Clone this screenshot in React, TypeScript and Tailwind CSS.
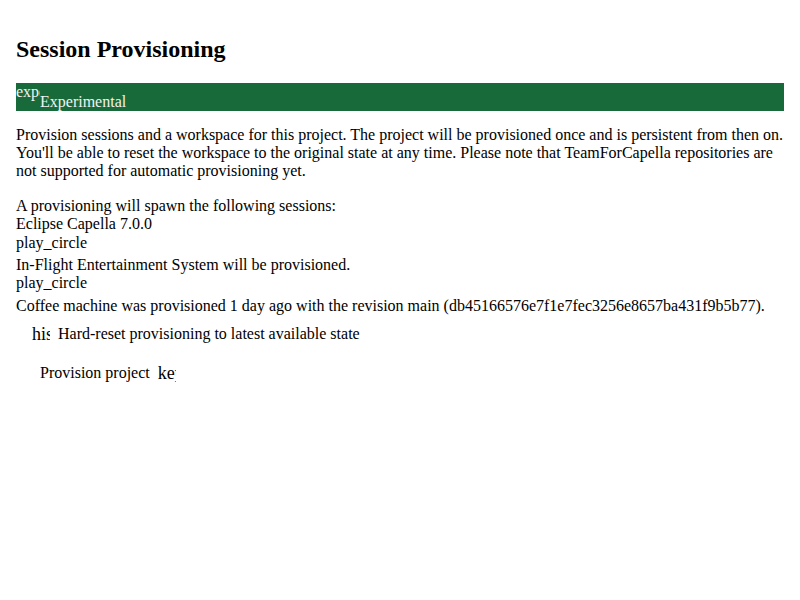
import React from "react";

// Session provisioning panel (rendered without its component stylesheet)

const SESSIONS = [
  { tool: "Eclipse Capella 7.0.0", note: "In-Flight Entertainment System will be provisioned." },
  {
    tool: null,
    note: "Coffee machine was provisioned 1 day ago with the revision main (db45166576e7f1e7fec3256e8657ba431f9b5b77).",
  },
];

const Icon: React.FC<{ name: string; className?: string }> = ({ name, className = "" }) => (
  <span className={`inline-block overflow-hidden whitespace-nowrap ${className}`}>{name}</span>
);

export default function App() {
  return (
    <div
      className="px-4 pt-4 text-[16px] leading-[1.15] text-black"
      style={{ fontFamily: '"Liberation Serif", "Times New Roman", serif' }}
    >
      <h2 className="mt-5 mb-[19px] text-[24px] font-bold leading-[1.15]">Session Provisioning</h2>

      <div className="flex h-[28px] items-start bg-[#186a3b] text-[#f2f2f2]">
        <Icon name="experiment" className="w-[24px]" />
        <span className="pt-[10px]">Experimental</span>
      </div>

      <p className="mt-[15px] mb-4">
        Provision sessions and a workspace for this project. The project will be provisioned once and is
        persistent from then on. You'll be able to reset the workspace to the original state at any time.
        Please note that TeamForCapella repositories are not supported for automatic provisioning yet.
      </p>

      <div>A provisioning will spawn the following sessions:</div>
      <div>{SESSIONS[0].tool}</div>
      {SESSIONS.map((s) => (
        <div key={s.note}>
          <div className="mb-[4px]">play_circle</div>
          <div>{s.note}</div>
        </div>
      ))}

      <div className="mt-[10px] flex items-center pl-4">
        <Icon name="history" className="h-[18px] w-[18px] text-[18px] leading-[18px]" />
        <span className="ml-[8px]">Hard-reset provisioning to latest available state</span>
      </div>

      <div className="mt-[20px] flex items-center pl-6">
        <span>Provision project</span>
        <Icon name="keyboard_arrow_down" className="ml-[8px] h-[18px] w-[18px] text-[18px] leading-[18px]" />
      </div>
    </div>
  );
}
